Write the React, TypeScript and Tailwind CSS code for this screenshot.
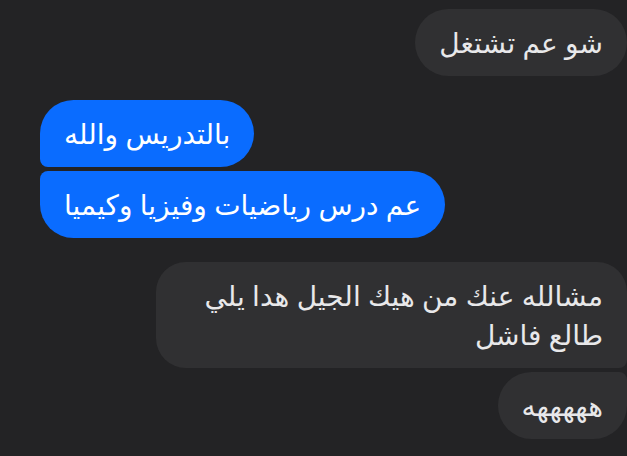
import React from "react";

type Msg = {
  id: number;
  text: string;
  mine: boolean;
  shape: string;
  gap: string;
};

const messages: Msg[] = [
  { id: 1, text: "شو عم تشتغل", mine: false, shape: "rounded-[34px]", gap: "mt-[9px]" },
  { id: 2, text: "بالتدريس والله", mine: true, shape: "rounded-[34px] rounded-bl-[8px]", gap: "mt-[24px]" },
  { id: 3, text: "عم درس رياضيات وفيزيا وكيميا", mine: true, shape: "rounded-[34px] rounded-tl-[8px]", gap: "mt-[4px]" },
  { id: 4, text: "مشالله عنك من هيك الجيل هدا يلي طالع فاشل", mine: false, shape: "rounded-[30px] rounded-br-[8px]", gap: "mt-[24px]" },
  { id: 5, text: "هههههه", mine: false, shape: "rounded-[34px] rounded-tr-[8px]", gap: "mt-[4px]" },
];

function Bubble({ msg }: { msg: Msg }) {
  return (
    <div className={`flex ${msg.mine ? "justify-start pl-[40px]" : "justify-end"} ${msg.gap}`}>
      <div
        dir="rtl"
        className={`${msg.shape} ${
          msg.mine ? "bg-[#0a6cff] text-white" : "bg-[#303032] text-[#e8e8ea]"
        } max-w-[471px] px-[24px] py-[14px] text-[28px] leading-[39px]`}
      >
        {msg.text}
      </div>
    </div>
  );
}

export default function App() {
  return (
    <div
      className="w-[627px] h-[456px] overflow-hidden bg-[#232325]"
      style={{ fontFamily: '"Noto Sans", "DejaVu Sans", sans-serif' }}
    >
      {messages.map((m) => (
        <Bubble key={m.id} msg={m} />
      ))}
    </div>
  );
}
